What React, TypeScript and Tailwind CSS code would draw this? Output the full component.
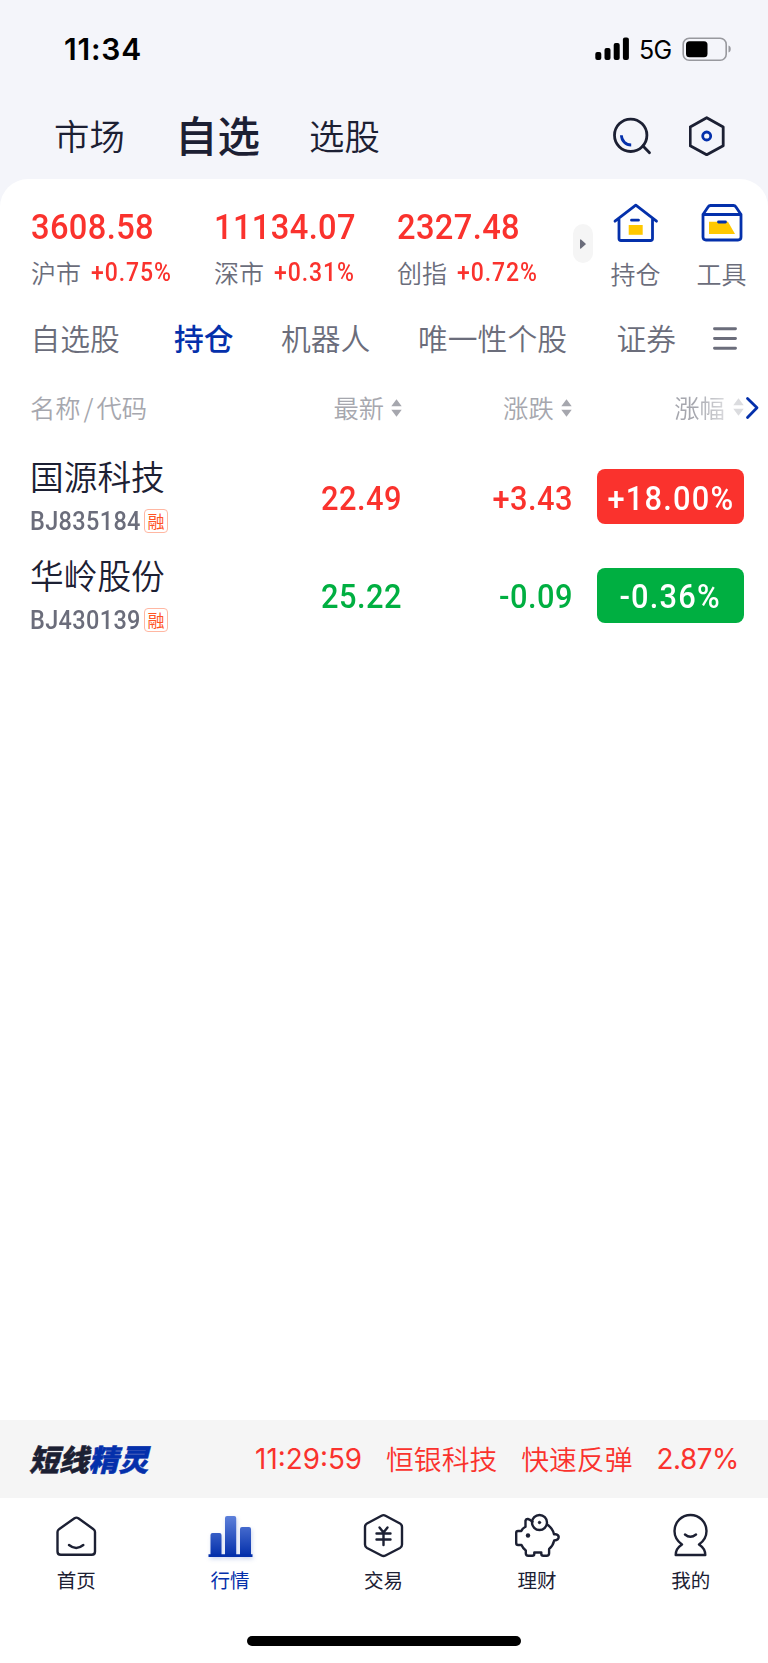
import type { ReactNode } from 'react'
import clsx from 'clsx'

interface IndexQuote {
  value: string
  name: string
  change: string
  width: string
}

interface Stock {
  name: string
  code: string
  price: string
  diff: string
  percent: string
  up: boolean
}

const INDEXES: IndexQuote[] = [
  { value: '3608.58', name: '沪市', change: '+0.75%', width: 'w-[183px]' },
  { value: '11134.07', name: '深市', change: '+0.31%', width: 'w-[183px]' },
  { value: '2327.48', name: '创指', change: '+0.72%', width: 'w-[176px]' },
]

const GROUPS = [
  { name: '自选股', width: 'w-[143.5px]' },
  { name: '持仓', width: 'w-[107px]', active: true },
  { name: '机器人', width: 'w-[137px]' },
  { name: '唯一性个股', width: 'w-[198.5px]' },
  { name: '证券', width: 'w-[94px]' },
]

const STOCKS: Stock[] = [
  { name: '国源科技', code: 'BJ835184', price: '22.49', diff: '+3.43', percent: '+18.00%', up: true },
  { name: '华岭股份', code: 'BJ430139', price: '25.22', diff: '-0.09', percent: '-0.36%', up: false },
]

export default function App(): React.JSX.Element {
  return (
    <div className="flex h-[1663px] w-[768px] flex-col overflow-hidden bg-[#f4f5fa] font-['Noto_Sans_CJK_SC',sans-serif] leading-none whitespace-nowrap text-[#1c2033]">
      <StatusBar />
      <TopTabs />
      <main className="flex flex-1 flex-col rounded-t-[28px] bg-white pt-6">
        <IndexStrip />
        <GroupTabs />
        <TableHead />
        {STOCKS.map((s) => (
          <StockRow key={s.code} stock={s} />
        ))}
      </main>
      <Ticker />
      <BottomNav />
    </div>
  )
}

function StatusBar(): React.JSX.Element {
  return (
    <div className="flex h-[98px] items-center pr-9 pl-[64px] font-['Inter',sans-serif] text-black">
      <span className="text-[30px] font-semibold tracking-[0.8px]">11:34</span>
      <svg className="ml-auto" width="35" height="24" viewBox="0 0 35 24">
        <rect x="0.3" y="15" width="6" height="8" rx="2" />
        <rect x="9.5" y="11" width="6" height="12" rx="2" />
        <rect x="18.7" y="6" width="6" height="17" rx="2" />
        <rect x="27.9" y="0.5" width="6" height="22.5" rx="2" />
      </svg>
      <span className="mt-0.5 ml-[9px] w-[43px] text-[25px] tracking-[-0.7px]">5G</span>
      <svg width="50" height="24" viewBox="0 0 50 24">
        <rect x="1.2" y="1.2" width="43" height="22" rx="6" fill="none" stroke="#98999e" strokeWidth="1.6" />
        <rect x="4" y="4.2" width="21.5" height="16" rx="3.5" />
        <path d="M46.5 8.5c3 .8 3 6.2 0 7z" fill="#98999e" />
      </svg>
    </div>
  )
}

function TopTabs(): React.JSX.Element {
  return (
    <div className="flex h-[81px] items-center pr-[41px] pb-[5px] pl-[54px]">
      <span className="mb-0.5 w-[121px] text-[35.4px] font-[350]">市场</span>
      <span className="mb-[3px] w-[134px] text-[42.5px] font-medium">自选</span>
      <span className="mb-0.5 text-[35.4px] font-[350]">选股</span>
      <svg className="ml-auto" width="40" height="40" viewBox="0 0 40 40" fill="none" strokeWidth="2.8">
        <circle cx="17.7" cy="19.3" r="16.2" stroke="#1c2033" />
        <path d="M30 30l6.5 6.8" stroke="#1c2033" strokeLinecap="round" />
        <path d="M8.400 19.300a9.800 9.800 0 0 0 9.800 9.700" stroke="#0430ab" />
      </svg>
      <svg className="ml-9" width="38" height="40" viewBox="0 0 38 40" fill="none" strokeWidth="2.8">
        <path d="M17.700 1.700l16.500 9.300v18.800l-16.500 9-16.500-9V11z" stroke="#1c2033" strokeLinejoin="round" />
        <circle cx="17.700" cy="20" r="4" stroke="#0430ab" />
      </svg>
    </div>
  )
}

function IndexStrip(): React.JSX.Element {
  return (
    <div className="flex h-[95px] pl-[31px]">
      {INDEXES.map((q) => (
        <div key={q.name} className={q.width}>
          <div className="flex h-[47px] origin-left scale-x-[.92] items-center pt-0.5 font-['Roboto',sans-serif] text-[35.5px] font-medium tracking-[0.4px] text-[#fa322d]">
            {q.value}
          </div>
          <div className="flex h-12 items-center">
            <span className="mb-[3px] w-[60px] text-[25px] font-[350] text-[#6b6d7b]">{q.name}</span>
            <span className="mb-[3px] origin-left scale-x-[.92] font-['Roboto',sans-serif] text-[25px] font-medium tracking-[1px] text-[#fa322d]">
              {q.change}
            </span>
          </div>
        </div>
      ))}
      <div className="mt-[21px] flex h-[39px] w-5 shrink-0 items-center justify-center rounded-[10px] bg-[#f5f5f5]">
        <svg width="6" height="10" viewBox="0 0 6 10">
          <path d="M0 .8Q0 0 1 .5L5.500 4.400Q6 5 5.500 5.600L1 9.500Q0 10 0 9.200z" fill="#6b6d7b" />
        </svg>
      </div>
      <Shortcut label="持仓" className="ml-[17.5px] w-[50px]">
        <svg width="46" height="40" viewBox="0 0 46 40" fill="none" stroke="#0430ab" strokeWidth="2.8" strokeLinecap="round" strokeLinejoin="round">
          <path d="M15.700 22h14v9.800h-14z" fill="#ffc800" stroke="none" />
          <path d="M2 18.200L22.800 2.200 43.500 18.200M6 16.500v19q0 2 2 2h29.500q2 0 2-2v-19M18.500 17.200h7" />
        </svg>
      </Shortcut>
      <Shortcut label="工具" className="ml-9 w-[50px]">
        <svg width="44" height="40" viewBox="0 0 44 40" fill="none" stroke="#0430ab" strokeWidth="2.8" strokeLinecap="round" strokeLinejoin="round">
          <path d="M9 18.800h19l7 12.200H9z" fill="#ffc800" stroke="none" />
          <path d="M3 11.500L8.200 3.800q.8-1.300 2.300-1.300h23q1.500 0 2.300 1.300L41 11.500v22.500q0 3-3 3H6q-3 0-3-3zH41M18.500 19h7" />
        </svg>
      </Shortcut>
    </div>
  )
}

function Shortcut({
  label,
  className,
  children,
}: {
  label: string
  className: string
  children: ReactNode
}): React.JSX.Element {
  return (
    <div className={clsx('flex shrink-0 flex-col items-center', className)}>
      <div className="h-[47px]">{children}</div>
      <span className="flex h-[46px] items-center text-[25px] font-[350] text-[#6b6d7b]">{label}</span>
    </div>
  )
}

function GroupTabs(): React.JSX.Element {
  return (
    <div className="flex h-[82px] items-center pl-[30.5px]">
      {GROUPS.map((g) => (
        <span
          key={g.name}
          className={clsx(
            'mb-0.5 shrink-0 text-[29.8px]',
            g.width,
            g.active ? 'font-medium text-[#0430ab]' : 'font-[350] text-[#6b6d7b]',
          )}
        >
          {g.name}
        </span>
      ))}
      <svg width="26" height="24" viewBox="0 0 26 24" stroke="#6b6d7b" strokeWidth="2.9" strokeLinecap="round">
        <path d="M3.500 1.800h21M3.500 11.500h21M3.500 21.200h21" />
      </svg>
    </div>
  )
}

function SortIcon({ className }: { className?: string }): React.JSX.Element {
  return (
    <svg className={className} width="11" height="18" viewBox="0 0 11 18" fill="#a6a7ae">
      <path d="M5.500 0.300L10.700 7.300H.3zM.3 10.700h10.400L5.500 17.700z" />
    </svg>
  )
}

function TableHead(): React.JSX.Element {
  return (
    <div className="flex h-[67.5px] items-center pb-[12.5px] pl-[30px] text-[25.3px] font-[350] text-[#a6a7ae]">
      <span className="w-[303.5px]">
        名称<span className="mx-[3px]">/</span>代码
      </span>
      <span>最新</span>
      <SortIcon className="ml-[7px]" />
      <span className="ml-[101px]">涨跌</span>
      <SortIcon className="ml-[7.5px]" />
      <div className="ml-[102px] flex items-center [mask-image:linear-gradient(to_right,#000_30%,#0006_75%)]">
        <span>涨幅</span>
        <SortIcon className="ml-2" />
      </div>
      <svg width="16" height="24" viewBox="0 0 16 24" fill="none" stroke="#0430ab" strokeWidth="2.8" strokeLinecap="round" strokeLinejoin="round">
        <path d="M3.500 2.500l9.500 9.300L3.500 21.500" />
      </svg>
    </div>
  )
}

function StockRow({ stock }: { stock: Stock }): React.JSX.Element {
  const tone = stock.up ? 'text-[#fa322d]' : 'text-[#00af41]'

  return (
    <div className="flex h-[98.5px] items-center pr-6 pl-[30px] font-['Roboto',sans-serif] text-[33.5px] font-medium tracking-[0.5px]">
      <div className="w-[190px] font-['Noto_Sans_CJK_SC',sans-serif] tracking-normal">
        <div className="flex h-[46px] items-center pb-px text-[33.7px] font-[350]">{stock.name}</div>
        <div className="flex h-10 items-center pt-[3px]">
          <span className="w-[114px] origin-left scale-x-[.92] pt-px font-['Roboto',sans-serif] text-[25.5px] font-medium tracking-[0.4px] text-[#6b6d7b]">
            {stock.code}
          </span>
          <span className="flex size-6 shrink-0 items-center justify-center rounded-[4px] border-[1.5px] border-[#ffb7a2] pb-px text-[17px] font-normal text-[#ff5425]">
            融
          </span>
        </div>
      </div>
      <span className={clsx('w-[182px] origin-right scale-x-[.92] pt-[3px] text-right', tone)}>{stock.price}</span>
      <span className={clsx('w-[171px] origin-right scale-x-[.92] pt-[3px] text-right', tone)}>{stock.diff}</span>
      <div
        className={clsx(
          'ml-auto flex h-[55px] w-[147px] items-center justify-center rounded-[8px] tracking-[1.3px] text-white',
          stock.up ? 'bg-[#fa322d]' : 'bg-[#00af41]',
        )}
      >
        <span className="scale-x-[.92] pt-[3px]">{stock.percent}</span>
      </div>
    </div>
  )
}

function Ticker(): React.JSX.Element {
  return (
    <div className="flex h-[78px] items-center bg-[#f5f5f5] pr-[29px] pl-[29px] text-[27.8px] font-[350] text-[#fa322d]">
      <div className="text-[29.8px] font-black text-[#1c2033] italic [-webkit-text-stroke:0.5px_currentColor]">
        短线<span className="text-[#0430ab]">精灵</span>
      </div>
      <span className="ml-auto pt-px font-['Inter',sans-serif] font-normal">11:29:59</span>
      <span className="ml-6 pb-px">恒银科技</span>
      <span className="ml-6 pb-px">快速反弹</span>
      <span className="ml-6 pt-px font-['Inter',sans-serif] font-normal tracking-[-0.4px]">2.87%</span>
    </div>
  )
}

function BottomNav(): React.JSX.Element {
  return (
    <nav className="flex h-[165px] flex-col items-center bg-white pt-[14px] text-[#1c2033]">
      <div className="grid w-full grid-cols-5">
        <NavItem label="首页">
          <path d="M3.500 20q0-1.800 1.500-2.800L20.500 6.200q1.900-1.200 3.800 0L39.500 17.200q1.500 1 1.500 2.800V39.500q0 3.300-3.300 3.300H6.800q-3.300 0-3.300-3.300zM15 33q7.200 5.800 14.300 0" />
        </NavItem>
        <NavItem label="行情" active>
          <defs>
            <linearGradient id="bars" gradientUnits="userSpaceOnUse" x1="0" y1="4" x2="0" y2="44">
              <stop offset="0" stopColor="#5d80da" />
              <stop offset="1" stopColor="#0430ab" />
            </linearGradient>
          </defs>
          <g fill="url(#bars)" stroke="none">
            <path d="M2.500 23q0-2 2-2h7q2 0 2 2v20h-11zM17 6q0-2 2-2h7.200q2 0 2 2v37H17zM32 17q0-2 2-2h7q2 0 2 2v26H32z" />
            <path d="M.5 42.300h44v2.700H.5z" fill="#0430ab" />
          </g>
        </NavItem>
        <NavItem label="交易">
          <path d="M20.500 3.700q2-1.100 4 0L39 11.500q2 1.100 2 3.500v17.500q0 2.400-2 3.500L24.500 43.500q-2 1.100-4 0L6 36q-2-1.100-2-3.500V15q0-2.400 2-3.500z" />
          <path d="M18.500 15.500l4 5 4-5M15.500 21.500h14M15.500 27.500h14M22.500 21V33" />
        </NavItem>
        <NavItem label="理财">
          <g transform="translate(-1 0)">
            <circle cx="25.500" cy="10.500" r="7.500" />
            <circle cx="25.500" cy="10.500" r="1.200" fill="#1c2033" strokeWidth="1" />
            <circle cx="14" cy="23.500" r="2.200" fill="#1c2033" stroke="none" />
            <path d="M18.500 9.800q-5.500-5-7-1.300v6.200q-3 1.500-4.200 4.300H4q-1.800 0-1.800 1.800V31q0 2 1.800 2h3.500q1.500 3.500 4.300 5.500v2.700q0 2.500 2.500 2.500h4q2 0 2-2v-1.200h7v1.200q0 2 2 2h3.300q2.500 0 2.500-2.500V37q3.800-3 5.100-8.500 4.500-.5 4.500-3.500-.3-2.500-3-2.800h-1.700q-1.500-6.200-6.500-9.400" />
          </g>
        </NavItem>
        <NavItem label="我的">
          <path d="M13 32.500Q5.500 27.200 5.500 19a16 16 0 0 1 32 0q0 8.200-7.500 13.500 6.300 4 6.300 10.500H6.700q0-6.500 6.300-10.500zM16 22.500q5.300 4.500 11 0" />
        </NavItem>
      </div>
      <div className="mt-11 h-2.5 w-[274px] rounded-full bg-black" />
    </nav>
  )
}

function NavItem({
  label,
  active,
  children,
}: {
  label: string
  active?: boolean
  children: ReactNode
}): React.JSX.Element {
  return (
    <div className={clsx('flex flex-col items-center', active && 'text-[#0430ab]')}>
      <svg
        className={clsx(active && 'drop-shadow-[1px_2px_2px_#0430ab33]')}
        width="45"
        height="48"
        viewBox="0 0 45 48"
        fill="none"
        stroke="#1c2033"
        strokeWidth="2.4"
        strokeLinecap="round"
        strokeLinejoin="round"
      >
        {children}
      </svg>
      <span className="mt-2 pr-px text-[19.5px] leading-[24px]">{label}</span>
    </div>
  )
}
